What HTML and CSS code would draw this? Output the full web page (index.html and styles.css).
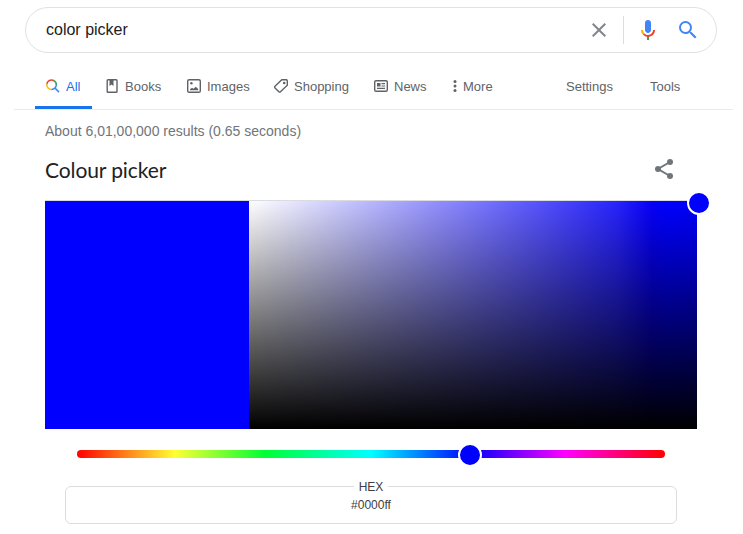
FILE: index.html
```html
<!DOCTYPE html>
<html lang="en">
<head>
<meta charset="utf-8">
<title>color picker</title>
<link rel="stylesheet" href="styles.css">
</head>
<body>
<header class="search">
  <span class="query">color picker</span>
  <svg class="clear" width="24" height="24" viewBox="0 0 24 24"><path d="M19 6.41L17.59 5 12 10.59 6.41 5 5 6.41 10.59 12 5 17.59 6.41 19 12 13.41 17.59 19 19 17.59 13.41 12z" fill="#80868b"/></svg>
  <span class="divider"></span>
  <svg class="mic" width="24" height="24" viewBox="0 0 24 24"><path d="M12 15c1.66 0 3-1.31 3-2.97V4.98C15 3.34 13.66 2 12 2S9 3.34 9 4.98v7.05C9 13.69 10.34 15 12 15z" fill="#4285f4"/><path d="M11 18.08h2V22h-2z" fill="#34a853"/><path d="M7.05 16.87A6.83 6.83 0 0 1 5 12h2c0 1.45.56 2.42 1.47 3.38v.32l-1.15 1.18z" fill="#f4b400"/><path d="M12 16.93a4.97 5.25 0 0 1-3.54-1.55l-1.41 1.49A6.5 6.5 0 0 0 12 18.88c3.87 0 6.99-2.92 6.99-6.88H17c0 2.92-2.24 4.93-5 4.93z" fill="#ea4335"/></svg>
  <svg class="go" width="24" height="24" viewBox="0 0 24 24"><path d="M15.5 14h-.79l-.28-.27A6.47 6.47 0 0 0 16 9.5 6.5 6.5 0 1 0 9.5 16c1.61 0 3.09-.59 4.23-1.57l.27.28v.79l5 4.99L20.49 19zm-6 0a4.5 4.5 0 1 1 0-9 4.5 4.5 0 0 1 0 9z" fill="#4285f4"/></svg>
</header>
<nav class="tabs">
  <a class="tab active"><svg width="16" height="16" viewBox="0 0 16 16" fill="none" stroke-width="1.5"><path d="M1.800 6.500a4.700 4.700 0 0 1 7.200-3.800" stroke="#ea4335"/><path d="M8.600 2.500a4.700 4.700 0 0 1 2.700 4.500" stroke="#34a853"/><path d="M1.800 6.200a4.700 4.700 0 0 0 4.900 5.200" stroke="#fbbc04"/><path d="M6.500 11.400A4.700 4.700 0 0 0 11.300 6.700M10 10.100l4 4" stroke="#4285f4"/></svg>All</a>
  <a class="tab"><svg width="16" height="16" viewBox="0 0 16 16"><rect x="3.2" y="1.800" width="9.800" height="12.400" rx=".8" fill="none" stroke="#5f6368" stroke-width="1.4"/><path d="M5.500 2h4v6L7.500 6.500 5.500 8z" fill="#5f6368"/></svg>Books</a>
  <a class="tab"><svg width="16" height="16" viewBox="0 0 16 16"><rect x="1.7" y="1.7" width="12.6" height="12.6" rx="1.4" fill="none" stroke="#5f6368" stroke-width="1.4"/><circle cx="5.4" cy="5.2" r="1.2" fill="#5f6368"/><path d="M4 12.200v-1l2-1.400 1.500 1 2.300-2 2.400 2.200v1.200z" fill="#5f6368"/></svg>Images</a>
  <a class="tab"><svg width="16" height="16" viewBox="0 0 16 16"><path d="M8.8 1.8h4.5a1 1 0 0 1 1 1v4.5L7.5 13.8a1.1 1.1 0 0 1-1.6 0L2 9.9a1.1 1.1 0 0 1 0-1.6z" fill="none" stroke="#5f6368" stroke-width="1.4"/><circle cx="11.2" cy="5" r="1.3" fill="#5f6368"/></svg>Shopping</a>
  <a class="tab"><svg width="16" height="16" viewBox="0 0 16 16"><rect x="1.7" y="2.7" width="12.6" height="10.6" rx="1.3" fill="none" stroke="#5f6368" stroke-width="1.4"/><path d="M4 5h3.5v3.5H4zM8.5 5H12v1.2H8.500zM8.500 7.400H12v1.200H8.500zM4 9.800h8V11H4z" fill="#5f6368"/></svg>News</a>
  <a class="tab more"><svg width="12" height="16" viewBox="0 0 12 16" fill="#5f6368"><circle cx="6" cy="3.600" r="1.500"/><circle cx="6" cy="8" r="1.500"/><circle cx="6" cy="12.400" r="1.500"/></svg>More</a>
  <a class="tab">Settings</a>
  <a class="tab">Tools</a>
</nav>
<main>
  <p class="stats">About 6,01,00,000 results (0.65 seconds)</p>
  <div class="heading">
    <h1>Colour picker</h1>
    <svg width="24" height="24" viewBox="0 0 24 24"><path d="M18 5L6 12l12 7" fill="none" stroke="#70757a" stroke-width="2"/><g fill="#70757a"><circle cx="18" cy="5" r="3"/><circle cx="6" cy="12" r="3"/><circle cx="18" cy="19" r="3"/></g></svg>
  </div>
  <section class="picker">
    <div class="swatch"></div>
    <div class="spectrum"><span class="handle corner"></span></div>
  </section>
  <div class="hue"><span class="handle slider"></span></div>
  <div class="field">
    <span class="label">HEX</span>
    <span class="value">#0000ff</span>
  </div>
</main>
</body>
</html>
```
FILE: styles.css
```css
* { box-sizing: border-box; }
body {
  margin: 0;
  background: #fff;
  font-family: "Liberation Sans", Arial, sans-serif;
  color: #202124;
}
svg { display: block; flex: none; }
.search {
  display: flex;
  align-items: center;
  width: 692px;
  height: 46px;
  margin: 7px 0 0 25px;
  padding: 0 16px 0 20px;
  border: 1px solid #dfe1e5;
  border-radius: 23px;
}
.query { flex: 1; font-size: 16px; line-height: 20px; }
.divider { width: 1px; height: 28px; margin: 0 12px; background: #dadce0; }
.go { margin-left: 16px; }
.tabs {
  display: grid;
  grid-template-columns: 69px 82px 87px 100px 76px 117px 84px 83px;
  width: 719px;
  height: 57px;
  margin-left: 14px;
  padding-left: 21px;
  border-bottom: 1px solid #ebebeb;
}
.tab {
  display: flex;
  align-items: center;
  gap: 5px;
  height: 56px;
  padding-top: 11px;
  font-size: 13px;
  line-height: 16px;
  color: #5f6368;
}
.tab svg { margin-top: -1px; }
.active {
  width: 57px;
  padding-left: 10px;
  padding-top: 14px;
  border-bottom: 3px solid #1a73e8;
  color: #1a73e8;
}
.more { gap: 2px; }
main { width: 652px; margin-left: 45px; }
.stats {
  margin: 13px 0 0;
  font-size: 14px;
  line-height: 16px;
  color: #70757a;
}
.heading {
  display: flex;
  align-items: center;
  justify-content: space-between;
  height: 61px;
  padding: 0 21px 0 0;
}
.heading svg { margin-top: -1px; }
h1 {
  margin: 1px 0 0;
  font: 400 21px/28px Lato, sans-serif;
  letter-spacing: -0.1px;
}
.picker { display: flex; height: 229px; border-top: 1px solid #dadce0; }
.swatch { width: 204px; background: #00f; }
.spectrum {
  position: relative;
  flex: 1;
  background:
    linear-gradient(to top, #000, transparent),
    linear-gradient(to right, #fff, #2824fc 82%, #0600f8 90%, #00f 93%, #0000fa);
}
.handle {
  position: absolute;
  width: 24px;
  height: 24px;
  border: 2px solid #fff;
  border-radius: 50%;
  background: #00f;
}
.corner { top: -10px; right: -14px; }
.hue {
  position: relative;
  height: 8px;
  margin: 21px 32px 0;
  border-radius: 4px;
  background: linear-gradient(to right, #f00 0%, #ff3 16.600%, #0f3 32%, #0ff 50%, #00f 67%, #f0f 83%, #f00 100%);
}
.slider { left: 381px; top: -7px; }
.field {
  display: flex;
  flex-direction: column;
  align-items: center;
  height: 38px;
  margin: 28px 20px 0;
  border: 1px solid #dadce0;
  border-radius: 6px;
  font-size: 12px;
  line-height: 16px;
  color: #3c4043;
}
.label { margin-top: -8px; padding: 0 5px; background: #fff; }
.value { margin-top: 2px; }
```
